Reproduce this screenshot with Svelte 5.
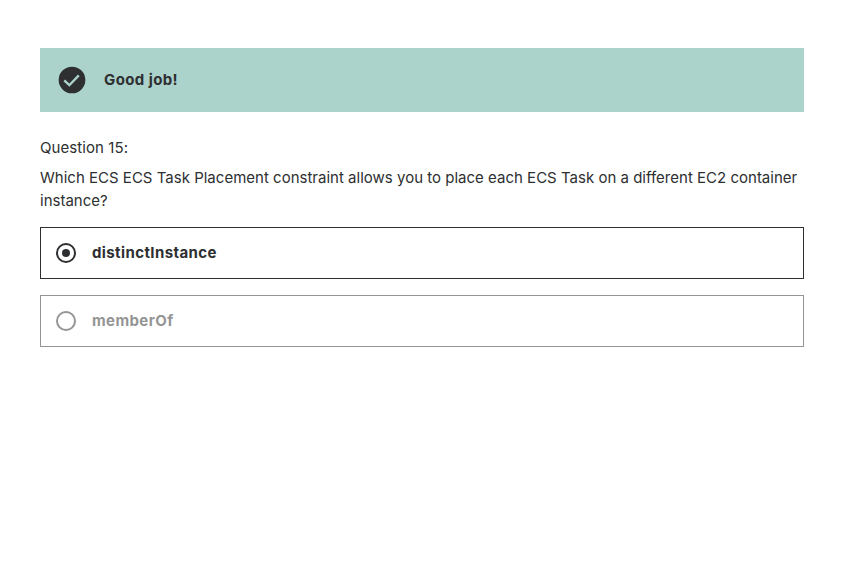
<script>
  const question = 'Which ECS ECS Task Placement constraint allows you to place each ECS Task on a different EC2 container instance?';
  const options = [
    { label: 'distinctInstance', selected: true },
    { label: 'memberOf', selected: false }
  ];
</script>

<main>
  <div class="alert">
    <svg width="32" height="32" viewBox="0 0 24 24"><circle cx="12" cy="12" r="10" fill="#2d2f31" /><path fill="none" stroke="#acd2cc" stroke-width="1.75" d="m6.2 12.3 3.8 3.6 7.1-7.4" /></svg>
    <strong>Good job!</strong>
  </div>
  <div class="number">Question 15:</div>
  <div class="question">{question}</div>
  <ul>
    {#each options as option}
      <li class:selected={option.selected}>
        <span class="radio"></span>
        <span class="label">{option.label}</span>
      </li>
    {/each}
  </ul>
</main>

<style>
  :global(body) { background: #fff; }
  main { box-sizing: border-box; width: 841px; height: 584px; padding: 48px 37px 0 40px; font: 15px/22px Inter, sans-serif; color: #2d2f31; }
  .alert { display: flex; align-items: center; gap: 16px; height: 64px; padding-left: 16px; box-sizing: border-box; background: #acd2cc; }
  strong, .label { font-weight: 700; letter-spacing: 0.4px; }
  .number { margin-top: 24px; height: 24px; line-height: 24px; letter-spacing: 0.08px; }
  .question { margin-top: 6px; line-height: 23px; letter-spacing: 0.01px; }
  ul { list-style: none; margin: 15px 0 0; padding: 0; display: flex; flex-direction: column; gap: 16px; }
  li { display: flex; align-items: center; gap: 16px; height: 52px; box-sizing: border-box; border: 1px solid #959595; padding-left: 15px; color: #959595; }
  .radio { box-sizing: border-box; width: 20px; height: 20px; border: 2px solid currentColor; border-radius: 50%; display: flex; align-items: center; justify-content: center; }
  li.selected { border-color: #2d2f31; color: #2d2f31; }
  .selected .radio::after { content: ''; width: 8px; height: 8px; border-radius: 50%; background: currentColor; }
</style>
